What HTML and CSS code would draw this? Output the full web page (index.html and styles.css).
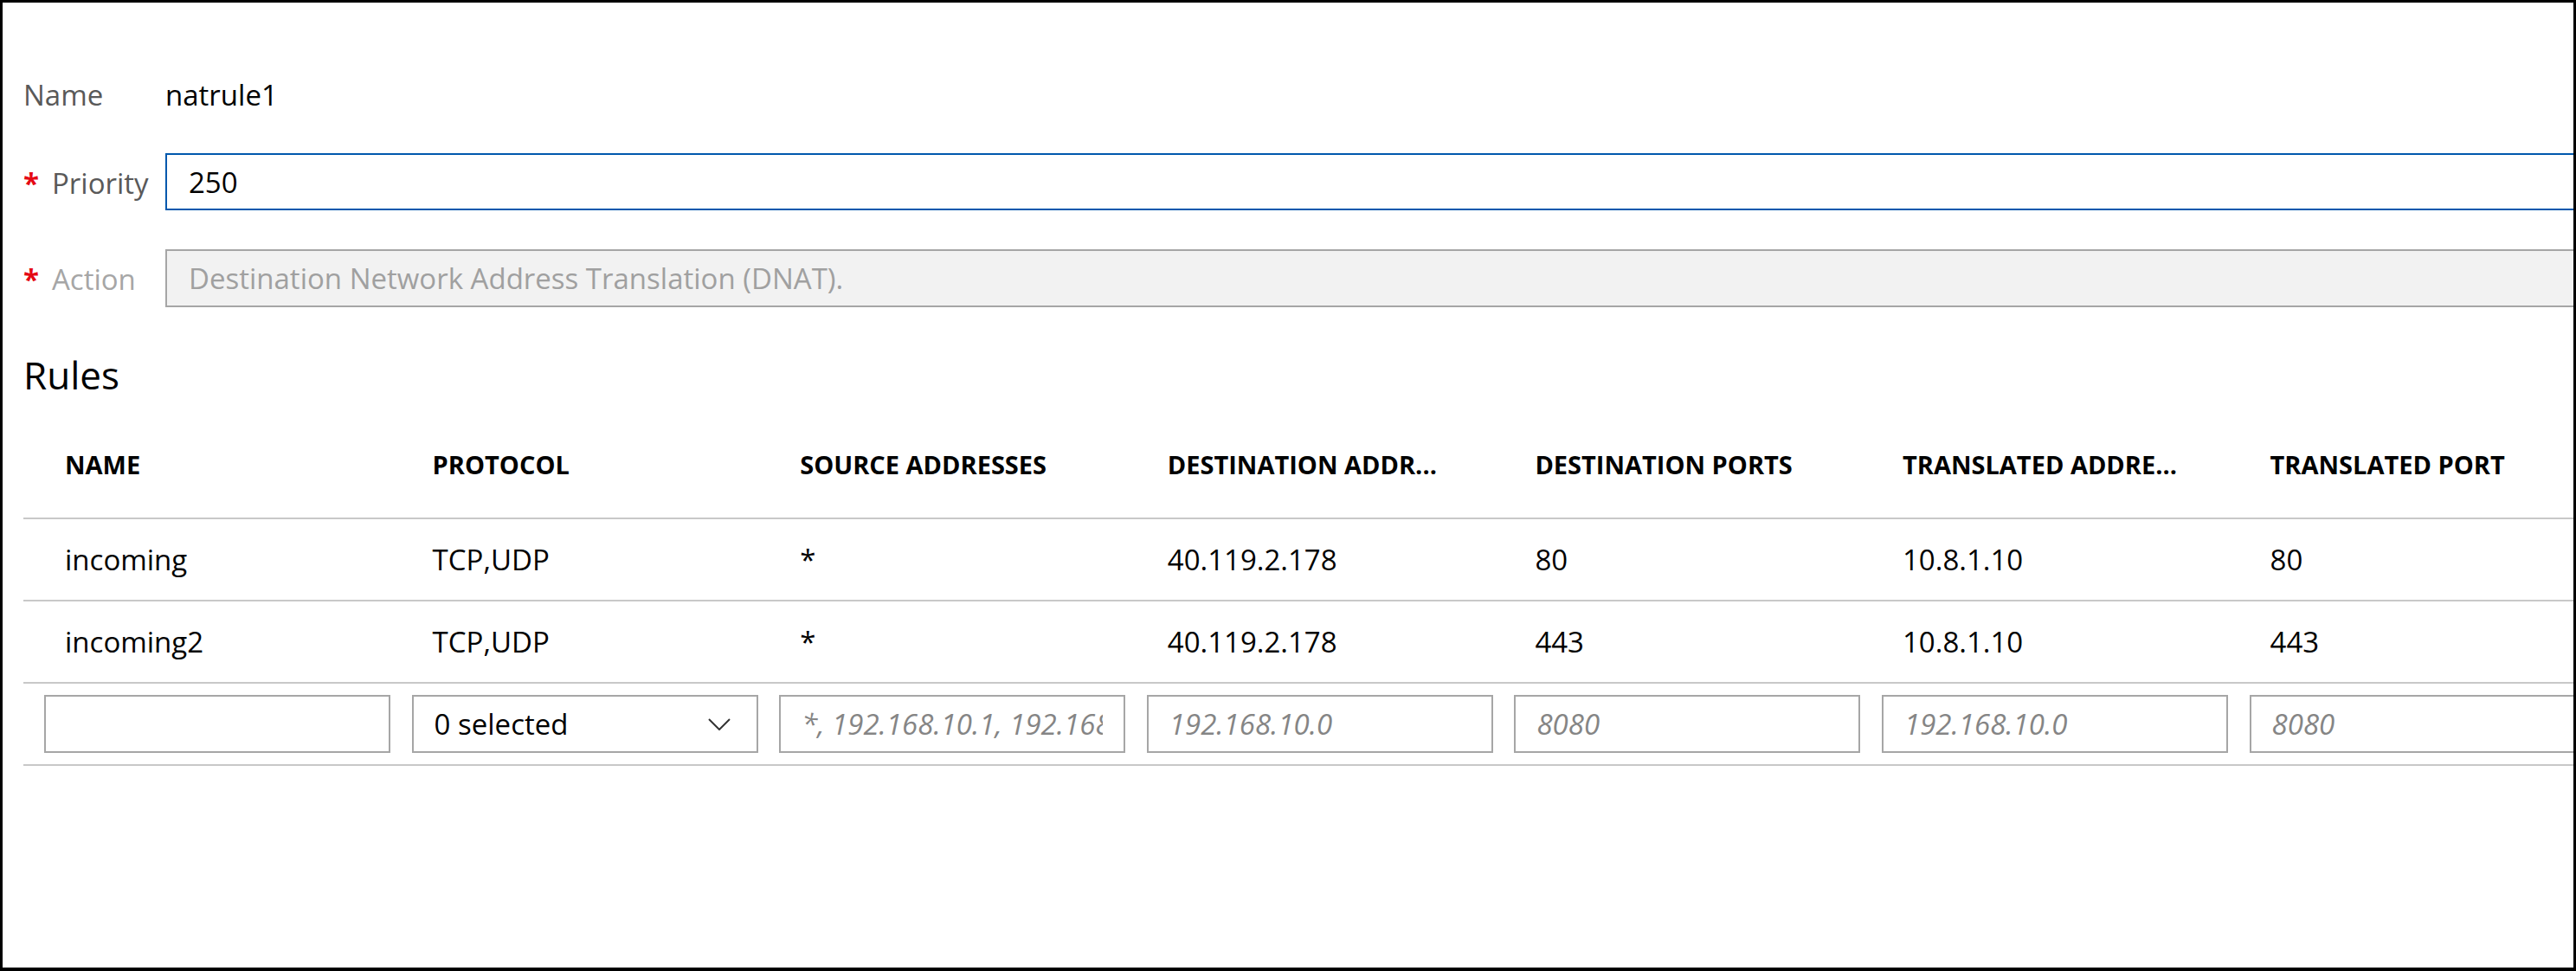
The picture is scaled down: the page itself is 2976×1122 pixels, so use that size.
FILE: index.html
```html
<!DOCTYPE html>
<html lang="en">
<head>
<meta charset="utf-8">
<title>NAT rule</title>
<link rel="stylesheet" href="styles.css">
</head>
<body>
<div class="frame">
  <div class="field field-name">
    <div class="field-label">Name</div>
    <div class="field-value">natrule1</div>
  </div>
  <div class="field field-priority">
    <div class="field-label"><span class="req">*</span>Priority</div>
    <input class="text-input focused" type="text" value="250">
  </div>
  <div class="field field-action">
    <div class="field-label disabled"><span class="req">*</span>Action</div>
    <input class="text-input readonly" type="text" value="Destination Network Address Translation (DNAT)." disabled>
  </div>

  <h2 class="section-title">Rules</h2>

  <div class="rules-table">
    <div class="tr thead">
      <div class="th">NAME</div>
      <div class="th">PROTOCOL</div>
      <div class="th">SOURCE ADDRESSES</div>
      <div class="th">DESTINATION ADDR...</div>
      <div class="th">DESTINATION PORTS</div>
      <div class="th">TRANSLATED ADDRE...</div>
      <div class="th">TRANSLATED PORT</div>
    </div>
    <div class="tr trow">
      <div class="td">incoming</div>
      <div class="td">TCP,UDP</div>
      <div class="td">*</div>
      <div class="td">40.119.2.178</div>
      <div class="td">80</div>
      <div class="td">10.8.1.10</div>
      <div class="td">80</div>
    </div>
    <div class="tr trow">
      <div class="td">incoming2</div>
      <div class="td">TCP,UDP</div>
      <div class="td">*</div>
      <div class="td">40.119.2.178</div>
      <div class="td">443</div>
      <div class="td">10.8.1.10</div>
      <div class="td">443</div>
    </div>
    <div class="tr trow input-row">
      <div class="tc"><input class="cell-input" type="text"></div>
      <div class="tc">
        <div class="cell-input select">
          <span>0 selected</span>
          <svg class="chevron" width="26" height="14" viewBox="0 0 26 14"><polyline points="1,1 13,13 25,1" fill="none" stroke="#333" stroke-width="2"/></svg>
        </div>
      </div>
      <div class="tc"><input class="cell-input" type="text" placeholder="*, 192.168.10.1, 192.168.10.0/24"></div>
      <div class="tc"><input class="cell-input" type="text" placeholder="192.168.10.0"></div>
      <div class="tc"><input class="cell-input" type="text" placeholder="8080"></div>
      <div class="tc"><input class="cell-input" type="text" placeholder="192.168.10.0"></div>
      <div class="tc"><input class="cell-input" type="text" placeholder="8080"></div>
    </div>
  </div>
</div>
</body>
</html>
```

FILE: styles.css
```css
html, body {
  margin: 0;
  padding: 0;
  background: #fff;
}

body {
  font-family: "Open Sans", "Noto Sans", "Liberation Sans", sans-serif;
  font-size: 33px;
  color: #000;
}

.frame {
  box-sizing: border-box;
  width: 2976px;
  height: 1122px;
  border: 3px solid #000;
  border-bottom-width: 4px;
  overflow: hidden;
  padding: 74px 0 0 24px;
  background: #fff;
}

.field {
  display: flex;
  align-items: center;
  height: 66px;
}

.field-priority {
  margin-top: 34px;
}

.field-action {
  margin-top: 45px;
}

.field-label {
  flex: none;
  width: 164px;
  color: #595959;
  font-size: 33px;
  line-height: 44px;
  padding-top: 4px;
}

.field-name .field-label {
  padding-top: 0;
}

.field-label.disabled {
  color: #a6a6a6;
}

.req {
  color: #e50914;
  font-weight: 700;
  margin-right: 15px;
}

.field-value {
  color: #000;
  line-height: 44px;
}

.text-input {
  flex: none;
  box-sizing: border-box;
  width: 2808px;
  height: 66px;
  margin: 0;
  padding: 0 25px;
  border: 2px solid #a6a6a6;
  border-radius: 0;
  font: inherit;
  font-size: 33px;
  color: #000;
  background: #fff;
  outline: none;
}

.text-input.focused {
  border-color: #0058ad;
}

.text-input.readonly {
  background: #f2f2f2;
  color: #a0a0a0;
  height: 67px;
}

.section-title {
  margin: 49px 0 0;
  font-size: 44px;
  font-weight: 400;
  line-height: 60px;
  color: #000;
}

.rules-table {
  width: max-content;
}

.tr {
  display: grid;
  grid-template-columns: repeat(7, 424.6px);
  border-bottom: 2px solid #c8c8c8;
}

.thead {
  padding: 56px 0 43px;
}

.th {
  padding-left: 48px;
  font-size: 29px;
  font-weight: 700;
  line-height: 36px;
  white-space: nowrap;
  color: #000;
}

.trow {
  height: 93px;
  align-items: center;
}

.td {
  padding-left: 48px;
  line-height: 44px;
  white-space: nowrap;
}

.tc {
  padding-left: 24px;
}

.cell-input {
  box-sizing: border-box;
  width: 400px;
  height: 67px;
  margin: 0;
  padding: 0 24px;
  border: 2px solid #a6a6a6;
  border-radius: 0;
  font: inherit;
  font-size: 33px;
  color: #000;
  background: #fff;
  outline: none;
}

.cell-input::placeholder {
  color: #858585;
  font-style: italic;
  opacity: 1;
}

.select {
  display: flex;
  align-items: center;
  justify-content: space-between;
  padding-right: 30px;
}

.chevron {
  display: block;
  flex: none;
}
```
